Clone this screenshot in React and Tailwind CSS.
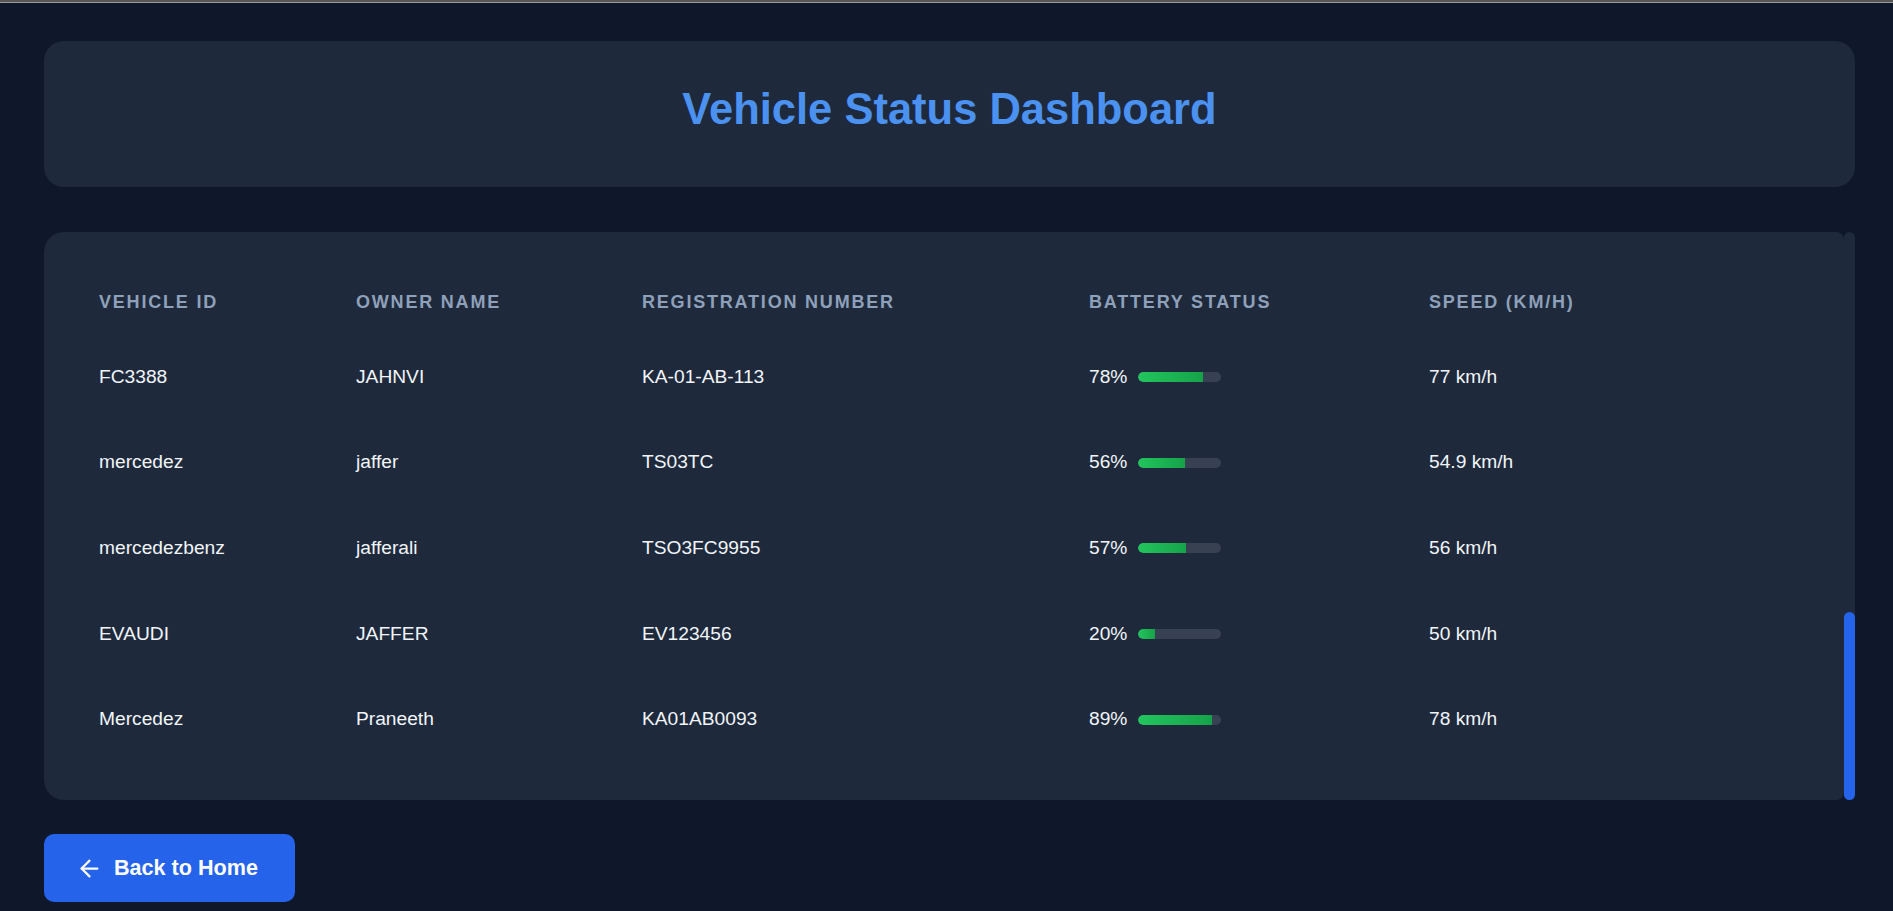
import { ArrowLeft } from 'lucide-react';

const vehicles = [
  { id: 'FC3388', owner: 'JAHNVI', reg: 'KA-01-AB-113', battery: 78, speed: '77 km/h' },
  { id: 'mercedez', owner: 'jaffer', reg: 'TS03TC', battery: 56, speed: '54.9 km/h' },
  { id: 'mercedezbenz', owner: 'jafferali', reg: 'TSO3FC9955', battery: 57, speed: '56 km/h' },
  { id: 'EVAUDI', owner: 'JAFFER', reg: 'EV123456', battery: 20, speed: '50 km/h' },
  { id: 'Mercedez', owner: 'Praneeth', reg: 'KA01AB0093', battery: 89, speed: '78 km/h' },
];

const headers = ['Vehicle ID', 'Owner Name', 'Registration Number', 'Battery Status', 'Speed (km/h)'];

const BatteryBar = ({ value }) => (
  <div className="flex items-center gap-[11px]">
    <span>{value}%</span>
    <div className="w-[83px] h-[10px] rounded-full bg-[#374151] overflow-hidden">
      <div
        className="h-full rounded-l-full bg-gradient-to-r from-[#22c55e] to-[#16a34a]"
        style={{ width: `${value}%` }}
      />
    </div>
  </div>
);

export default function App() {
  return (
    <div className="min-h-[911px] bg-[#0f172a] font-['Liberation_Sans',Arial,sans-serif]">
      {/* window edge */}
      <div className="h-[2px] bg-[#575757]" />
      <div className="h-px bg-[#9a9a9a]" />

      <div className="pl-[44px] pr-[38px] pt-[38px] flex flex-col">
        {/* Title card */}
        <div className="h-[146px] rounded-[20px] bg-[#1e293b] flex items-center justify-center pb-[10px]">
          <h1 className="text-[43.5px] leading-[1.15] font-bold text-[#4b91f0]">
            Vehicle Status Dashboard
          </h1>
        </div>

        {/* Table card with its scrollbar (list scrolled to the bottom) */}
        <div className="mt-[45px] h-[568px] flex">
          <div className="flex-1 rounded-l-[20px] rounded-r-[8px] bg-[#1e293b] px-[29px] overflow-hidden">
            <table className="w-full table-fixed border-collapse">
              <colgroup>
                <col className="w-[257px]" />
                <col className="w-[286px]" />
                <col className="w-[447px]" />
                <col className="w-[340px]" />
                <col />
              </colgroup>
              <thead>
                <tr>
                  {headers.map((h) => (
                    <th
                      key={h}
                      className="px-[26px] pt-[56.5px] pb-[18.6px] text-left text-[18px] leading-[27px] font-bold uppercase tracking-[1.8px] text-[#8fa1ba]"
                    >
                      {h}
                    </th>
                  ))}
                </tr>
              </thead>
              <tbody>
                {vehicles.map((v) => (
                  <tr key={v.reg} className="text-[19.2px] leading-[28.8px] text-[#f1f5f9]">
                    <td className="px-[26px] h-[85.7px] align-middle">{v.id}</td>
                    <td className="px-[26px] h-[85.7px] align-middle">{v.owner}</td>
                    <td className="px-[26px] h-[85.7px] align-middle">{v.reg}</td>
                    <td className="px-[26px] h-[85.7px] align-middle">
                      <BatteryBar value={v.battery} />
                    </td>
                    <td className="px-[26px] h-[85.7px] align-middle">{v.speed}</td>
                  </tr>
                ))}
              </tbody>
            </table>
          </div>
          <div className="w-[11px] rounded-full bg-[#1e293b] flex flex-col justify-end">
            <div className="h-[188px] rounded-full bg-[#2563eb]" />
          </div>
        </div>

        {/* Back button */}
        <div className="mt-[34px]">
          <button className="h-[68px] w-[251px] rounded-[10px] bg-[#2563eb] text-white flex items-center pl-[32px] gap-[11px] text-[21.6px] font-bold">
            <ArrowLeft size={27} strokeWidth={2} />
            Back to Home
          </button>
        </div>
      </div>
    </div>
  );
}
